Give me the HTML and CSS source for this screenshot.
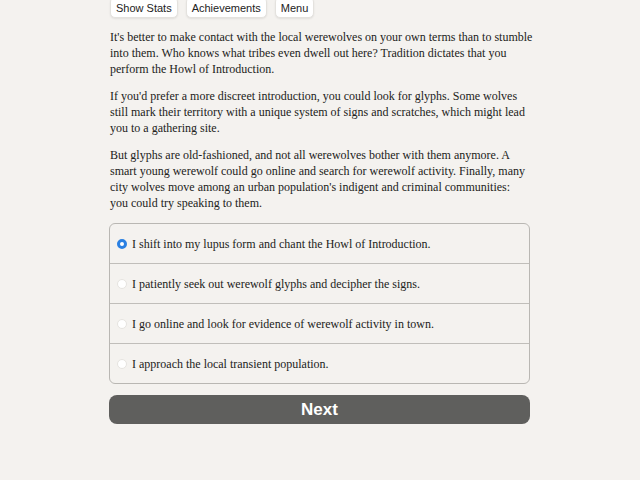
FILE: index.html
```html
<!DOCTYPE html>
<html lang="en">
<head>
  <meta charset="UTF-8" />
  <title>Werewolf</title>
  <link rel="stylesheet" href="styles.css">
</head>
<body>
<div class="page">
  <div class="topbar">
    <button class="tab">Show Stats</button>
    <button class="tab">Achievements</button>
    <button class="tab">Menu</button>
  </div>

  <p>It's better to make contact with the local werewolves on your own terms than to stumble into them. Who knows what tribes even dwell out here? Tradition dictates that you perform the Howl of Introduction.</p>
  <p>If you'd prefer a more discreet introduction, you could look for glyphs. Some wolves still mark their territory with a unique system of signs and scratches, which might lead you to a gathering site.</p>
  <p>But glyphs are old-fashioned, and not all werewolves bother with them anymore. A smart young werewolf could go online and search for werewolf activity. Finally, many city wolves move among an urban population's indigent and criminal communities: you&nbsp;could try speaking to them.</p>

  <form class="choices">
    <label class="choice"><input type="radio" name="c" checked> I shift into my lupus form and chant the Howl of Introduction.</label>
    <label class="choice"><input type="radio" name="c"> I patiently seek out werewolf glyphs and decipher the signs.</label>
    <label class="choice"><input type="radio" name="c"> I go online and look for evidence of werewolf activity in town.</label>
    <label class="choice"><input type="radio" name="c"> I approach the local transient population.</label>
  </form>
  <button class="next">Next</button>
</div>
</body>
</html>
```

FILE: styles.css
```css
body { margin: 0; background: #f4f2ef; color: #222220; font-family: "Liberation Serif", serif; font-size: 12px; line-height: 16px; }
.page { width: 421px; margin: 0 auto; padding-right: 1px; }
.topbar { display: flex; gap: 8px; margin-top: -3px; padding-left: 1px; }
.tab { font-family: "Liberation Sans", sans-serif; font-size: 11px; color: #222; background: #fff; border: 1px solid #e4e2de; border-radius: 5px; padding: 4px 5px 3px; box-shadow: 0 1px 2px rgba(0,0,0,0.08); }
p { margin: 11px -8px 0 0; padding-left: 1px; }
.choices { margin-top: 12px; border: 1px solid #b9b7b3; border-radius: 6px; overflow: hidden; }
.choice { display: flex; align-items: center; height: 39px; padding-left: 7px; border-top: 1px solid #c0beba; }
.choice:first-child { border-top: none; }
.choice input { appearance: none; width: 10px; height: 10px; margin: 0 5px 0 0; border-radius: 50%; background: #fff; border: 1px solid #e6e4e0; }
.choice input:checked { border: 3px solid #2b80e2; }
.next { display: block; width: 100%; margin-top: 11px; height: 29px; background: #5f5f5d; color: #fff; border: none; border-radius: 8px; font-family: "Liberation Sans", sans-serif; font-weight: bold; font-size: 17px; }
```
